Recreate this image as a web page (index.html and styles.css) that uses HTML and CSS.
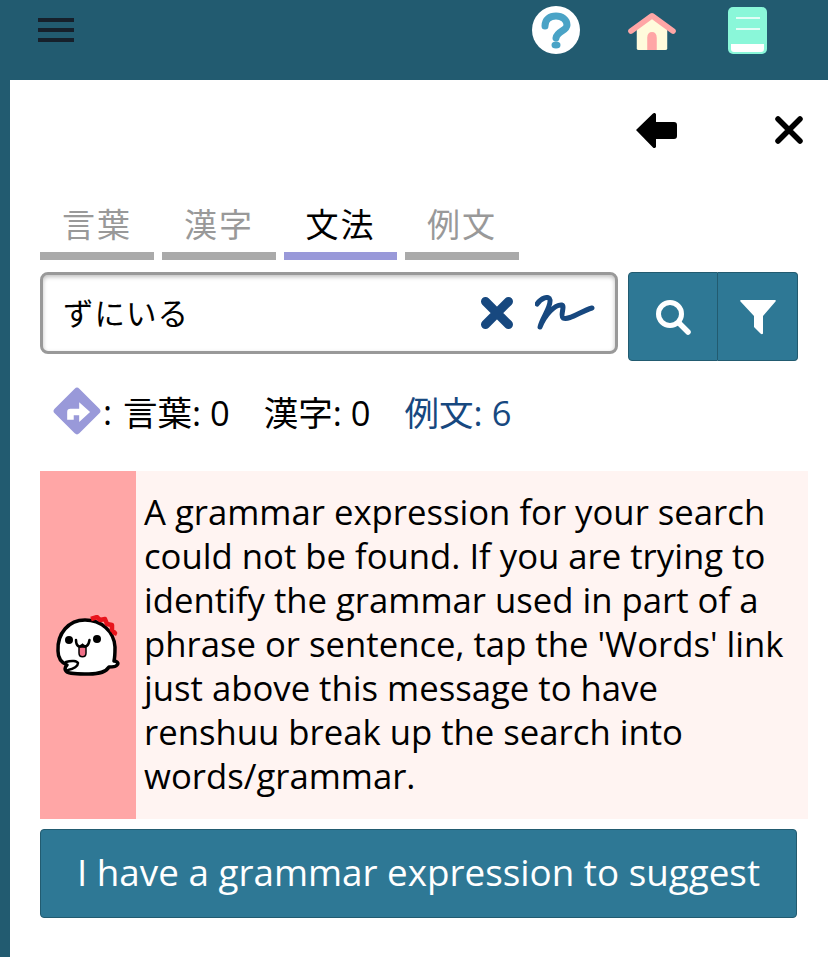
FILE: index.html
```html
<!DOCTYPE html>
<html lang="en">
<head>
  <meta charset="UTF-8">
  <title>renshuu</title>
  <link rel="stylesheet" href="styles.css">
</head>
<body>

  <header class="topbar">
    <div class="burger"><span></span><span></span><span></span></div>
    <div class="topicons">
      <svg class="icon-help" viewBox="0 0 48 48">
        <circle cx="24" cy="24" r="24" fill="#fff"/>
        <path d="M13 20c0-7 5-10 11-10s11 3.5 11 9c0 6-10 6-11 13" fill="none" stroke="#4aa3c6" stroke-width="7" stroke-linecap="round"/>
        <ellipse cx="24" cy="39" rx="4.5" ry="3.5" fill="#4aa3c6"/>
      </svg>
      <svg class="icon-home" viewBox="0 0 50 42">
        <path d="M9 17L25 5l16 12v21a2 2 0 0 1-2 2H11a2 2 0 0 1-2-2z" fill="#fffbdc"/>
        <path d="M20 40V27c0-4 2-6 5-6s5 2 5 6v13z" fill="#ffa6a6"/>
        <path d="M3 20L25 4l22 16" fill="none" stroke="#ffa6a6" stroke-width="6" stroke-linecap="round" stroke-linejoin="round"/>
      </svg>
      <svg class="icon-book" viewBox="0 0 39 47">
        <rect width="39" height="47" rx="5" fill="#8af7d9"/>
        <path d="M3 37h33v5a3 3 0 0 1-3 3H6a3 3 0 0 1-3-3z" fill="#fff"/>
        <path d="M8 11h24M8 22h24" stroke="#fff" stroke-width="1.5"/>
      </svg>
    </div>
  </header>

  <main class="panel">
    <div class="panel-nav">
      <svg class="icon-back" viewBox="0 0 41 37">
        <path d="M0 18L17 1.5c1-1 3-.5 3 1V10h18c2 0 3 1 3 3v11c0 2-1 3-3 3H20v7.5c0 1.5-2 2-3 1z" fill="#000"/>
      </svg>
      <svg class="icon-close" viewBox="0 0 30 30">
        <path d="M4 4l22 22M26 4L4 26" fill="none" stroke="#000" stroke-width="5.5" stroke-linecap="round"/>
      </svg>
    </div>

    <nav class="tabs">
      <div class="tab">言葉</div>
      <div class="tab">漢字</div>
      <div class="tab tab-active">文法</div>
      <div class="tab">例文</div>
    </nav>

    <div class="searchrow">
      <div class="searchbox">
        <span class="searchtext">ずにいる</span>
        <svg class="icon-clear" viewBox="0 0 34 34">
          <path d="M5.5 5.5l23 23M28.5 5.5l-23 23" fill="none" stroke="#17487f" stroke-width="9" stroke-linecap="round"/>
        </svg>
        <svg class="icon-draw" viewBox="0 0 60 36">
          <path d="M2 9C6 3 14 0 15 5c1 7-8 18-10 27C10 20 20 9 27 10c3 1-2 11 1 13 6 3 18-7 29-10" fill="none" stroke="#17487f" stroke-width="5" stroke-linecap="round" stroke-linejoin="round"/>
        </svg>
      </div>
      <div class="searchbtns">
        <button class="sbtn sbtn-search" type="button">
          <svg viewBox="0 0 36 36" width="36" height="36">
            <circle cx="15" cy="15" r="11.5" fill="none" stroke="#fff" stroke-width="5"/>
            <path d="M24 24l9 9" stroke="#fff" stroke-width="5.5" stroke-linecap="round"/>
          </svg>
        </button>
        <button class="sbtn sbtn-filter" type="button">
          <svg viewBox="0 0 36 36" width="36" height="36">
            <path d="M1 1h34c1 0 1 1 .5 1.5L23 17v17c0 1.5-1.5 1.5-2.5.5L14 28V17L.5 2.5C0 2 0 1 1 1z" fill="#fff"/>
          </svg>
        </button>
      </div>
    </div>

    <div class="counts">
      <svg class="icon-jump" viewBox="2 2 44 44">
        <rect x="8" y="8" width="32" height="32" rx="3" transform="rotate(45 24 24)" fill="#9999d9"/>
        <path d="M15 32V25c0-2 1-3 3-3h8v-6l10 9-10 9v-6h-5v4z" fill="#fff"/>
      </svg>
      <span class="count-sep">:</span>
      <span class="count">言葉: 0</span>
      <span class="count">漢字: 0</span>
      <span class="count count-link">例文: 6</span>
    </div>

    <section class="notice">
      <div class="notice-side">
        <svg class="mascot" viewBox="0 0 66 64">
          <path d="M3 36C2 18 14 5 30 5c16 0 29 11 30 27 0 6 0 10-1 14 3 0 5 2 3 4-1 2-5 2-8 2-3 5-9 7-20 7-10 0-19 0-22-2-3-2-2-5 0-7-7-3-9-8-9-14z" fill="#fff" stroke="#000" stroke-width="3.5" stroke-linejoin="round"/>
          <path d="M36 4l6-2 3 3 5-1 2 5 5 1 0 5 3 3-1 2" fill="none" stroke="#e8141c" stroke-width="4.5" stroke-linejoin="round"/>
          <circle cx="14" cy="25" r="4" fill="#000"/>
          <circle cx="42" cy="24" r="4" fill="#000"/>
          <path d="M24 32v6c0 5 7 5 7 0v-6z" fill="#f06f87" stroke="#000" stroke-width="1.5"/>
          <path d="M21 25c0 6 3 8 6.5 5 3 3 6 1 7-5" fill="none" stroke="#000" stroke-width="2.5" stroke-linecap="round"/>
          <path d="M11 47c6-2 11-1 12 1 0 3-4 6-10 7" fill="none" stroke="#000" stroke-width="2.5" stroke-linecap="round"/>
        </svg>
      </div>
      <p class="notice-text">A grammar expression for your search could not be found. If you are trying to identify the grammar used in part of a phrase or sentence, tap the 'Words' link just above this message to have renshuu break up the search into words/grammar.</p>
    </section>

    <button class="suggest" type="button">I have a grammar expression to suggest</button>
  </main>

</body>
</html>
```

FILE: styles.css
```css
html, body { margin: 0; height: 957px; overflow: hidden; }
body { background: #225b70; font-family: "Open Sans", "Noto Sans CJK JP", sans-serif; color: #000; }

.topbar { height: 80px; box-sizing: border-box; display: flex; justify-content: space-between; padding: 18px 61px 0 38px; }
.burger { display: flex; flex-direction: column; gap: 6px; width: 36px; }
.burger span { height: 4px; background: #16202b; }
.topicons { display: flex; align-items: flex-start; margin-top: -12px; }
.icon-help { width: 48px; height: 48px; }
.icon-home { width: 48px; height: 40px; margin: 6px 0 0 48px; }
.icon-book { width: 39px; height: 47px; margin: 1px 0 0 52px; }

.panel { margin-left: 10px; height: 877px; background: #fff; padding: 0 20px 0 30px; box-sizing: border-box; }
.panel-nav { display: flex; justify-content: flex-end; align-items: center; height: 100px; padding-right: 4px; }
.icon-back { width: 41px; height: 37px; margin-right: 97px; }
.icon-close { width: 30px; height: 30px; }

.tabs { display: flex; gap: 8px; margin-top: 22px; }
.tab { width: 114px; height: 58px; box-sizing: border-box; border-bottom: 8px solid #aaa; text-align: center; font-size: 33px; line-height: 42px; letter-spacing: 2px; color: #999; font-family: "Noto Sans CJK JP", sans-serif; }
.tab-active { width: 113px; border-bottom-color: #9999d9; color: #000; }

.searchrow { display: flex; align-items: flex-start; gap: 10px; margin-top: 12px; }
.searchbox { width: 578px; height: 82px; box-sizing: border-box; border: 3px solid #999; border-radius: 8px; box-shadow: inset 0 2px 4px rgba(0,0,0,.25); display: flex; align-items: center; padding-left: 20px; }
.searchtext { flex: 1; font-size: 30.5px; letter-spacing: 1px; font-family: "Noto Sans CJK JP", sans-serif; margin-top: -2px; }
.icon-clear { width: 34px; height: 34px; margin-right: 21px; }
.icon-draw { width: 60px; height: 36px; margin-right: 20px; }
.searchbtns { display: flex; }
.sbtn { height: 89px; padding: 0; background: #2e7895; border: 1px solid #225b70; display: flex; align-items: center; justify-content: center; }
.sbtn-search { width: 90px; border-radius: 4px 0 0 4px; }
.sbtn-filter { width: 80px; border-left: 0; border-radius: 0 4px 4px 0; }

.counts { display: flex; align-items: center; margin: 12px 0 0 13px; height: 76px; font-size: 34.5px; }
.icon-jump { width: 48px; height: 48px; margin-right: 2px; }
.count-sep { margin-right: 11px; }
.count { margin-right: 34px; }
.count-link { color: #17487f; }

.notice { display: flex; width: 768px; height: 348px; margin-top: 22px; background: #fff4f2; }
.notice-side { width: 96px; flex: none; background: #ffa6a6; display: flex; align-items: center; justify-content: center; }
.mascot { width: 66px; height: 64px; margin-top: 3px; }
.notice-text { margin: 0; padding: 19px 10px 0 8px; font-size: 34.7px; line-height: 44px; }

.suggest { display: block; width: 757px; height: 89px; margin-top: 10px; padding: 0 0 3px; background: #2e7895; color: #fff; border: 1px solid #225b70; border-radius: 4px; font-family: "Open Sans", sans-serif; font-size: 36.8px; }
```
